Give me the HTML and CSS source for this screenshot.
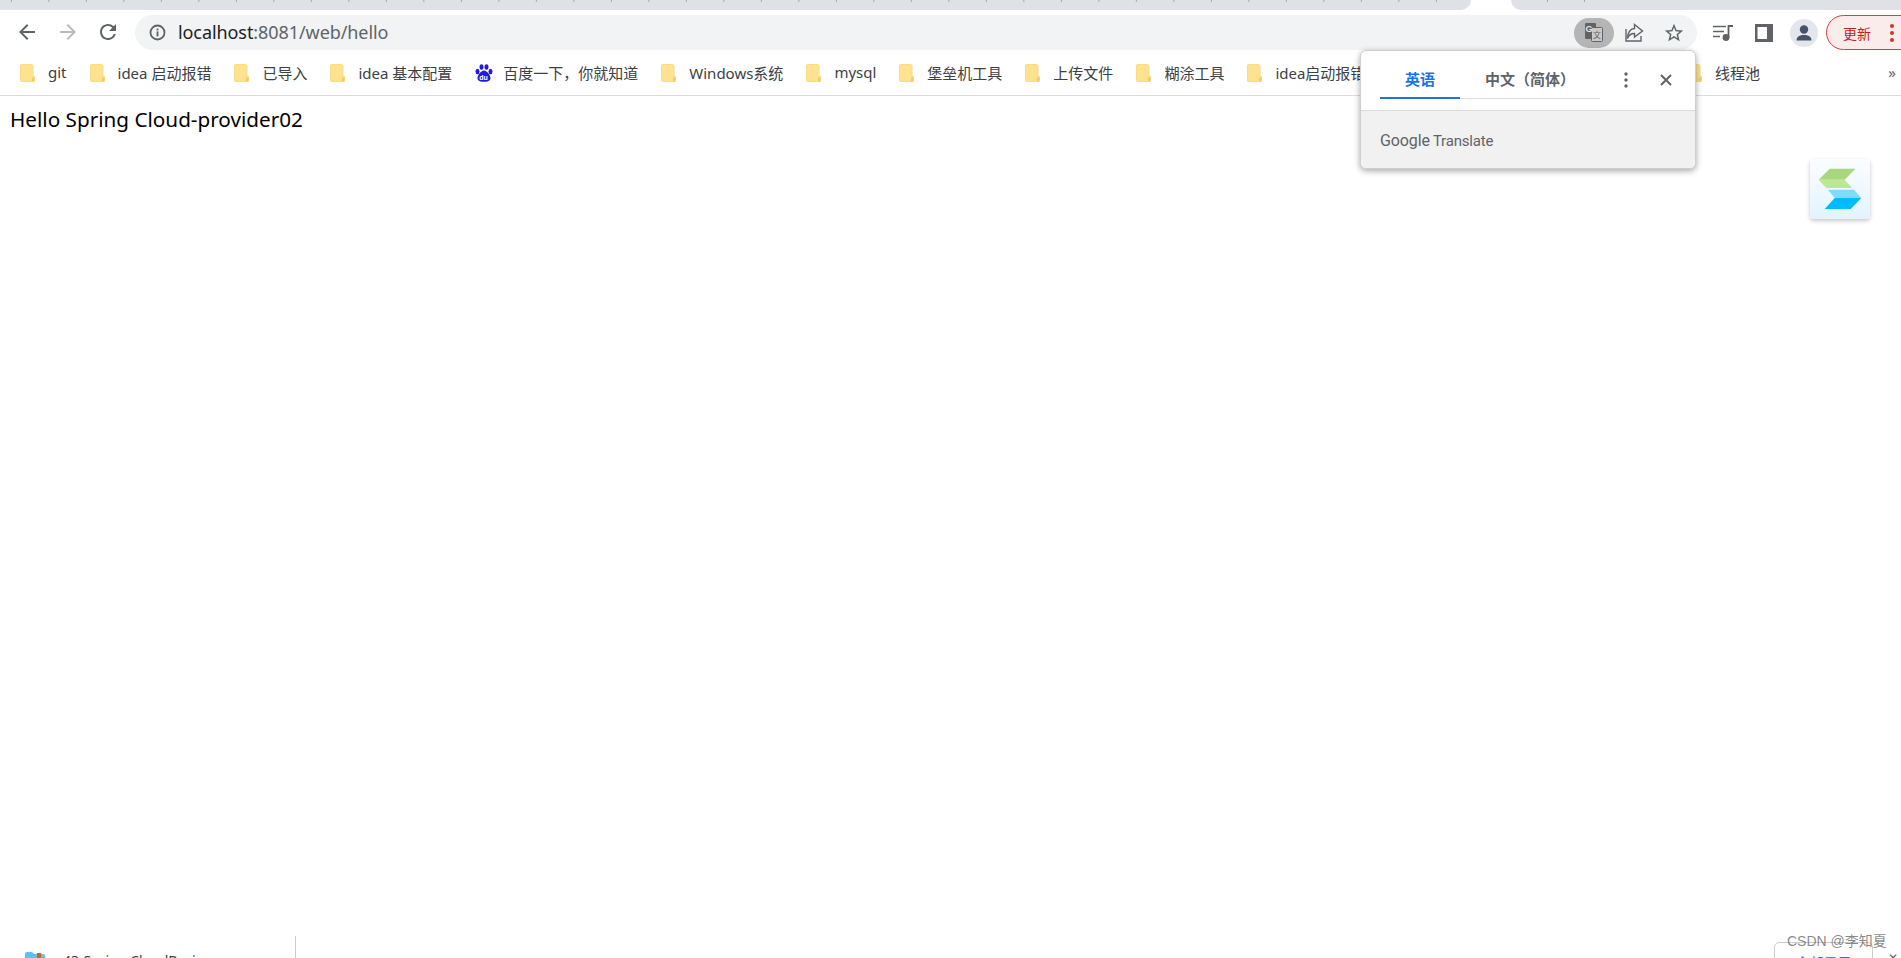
FILE: index.html
```html
<!DOCTYPE html>
<html lang="zh-CN">
<head>
<meta charset="utf-8">
<title>localhost:8081/web/hello</title>
<link rel="stylesheet" href="styles.css">
</head>
<body>
<svg class="defs" width="0" height="0" aria-hidden="true">
  <symbol id="folder" viewBox="0 0 15 18">
    <path d="M1.5.5H11.5Q13 .5 13 2V12.5H14.5V16.5Q14.5 17.5 13.5 17.5H1.5Q.5 17.5 .5 16.5V1.5Q.5 .5 1.5 .5Z" fill="#fee28f" stroke="#f8dc84"/>
    <path d="M12 13.5H14.5V17.5H12Z" fill="#f6cd5c"/>
  </symbol>
</svg>
<div class="app">
  <div class="tabstrip">
    <div class="tabs-left"></div>
    <div class="tab-active"></div>
    <div class="tabs-right"></div>
  </div>

  <div class="toolbar">
    <button class="nav nav-back"><svg width="24" height="24" viewBox="0 0 24 24"><path class="ico" d="M20 11H7.83l5.59-5.59L12 4l-8 8 8 8 1.41-1.41L7.83 13H20v-2z"/></svg></button>
    <button class="nav"><svg width="24" height="24" viewBox="0 0 24 24"><path class="ico-off" d="M4 11h12.17l-5.59-5.59L12 4l8 8-8 8-1.41-1.41L16.17 13H4v-2z"/></svg></button>
    <button class="nav"><svg width="24" height="24" viewBox="0 0 24 24"><path class="ico" d="M17.65 6.35A7.958 7.958 0 0 0 12 4c-4.42 0-7.99 3.58-7.99 8s3.57 8 7.99 8c3.73 0 6.84-2.55 7.73-6h-2.08A5.99 5.99 0 0 1 12 18c-3.31 0-6-2.69-6-6s2.69-6 6-6c1.66 0 3.14.69 4.22 1.78L13 11h7V4l-2.35 2.35z"/></svg></button>
    <div class="omnibox">
      <svg class="info" width="17" height="17" viewBox="0 0 17 17"><circle cx="8.5" cy="8.5" r="7" fill="none" stroke="#5f6368" stroke-width="1.8"/><rect class="ico" x="7.6" y="7.4" width="1.8" height="5"/><rect class="ico" x="7.6" y="4.6" width="1.8" height="1.8"/></svg>
      <span class="url"><span class="host">localhost</span>:8081/web/hello</span>
      <div class="omni-actions">
        <button class="translate-btn">
          <svg width="22" height="22" viewBox="0 0 22 22">
            <rect x="2" y="1" width="11" height="16" rx="1" fill="#5f6368"/>
            <rect x="8.5" y="5.5" width="11" height="14" rx="1" fill="#c9c9c9" stroke="#5f6368"/>
            <text class="tr-g" x="2.500" y="10">G</text>
            <text class="tr-z" x="10" y="15.500">文</text>
          </svg>
        </button>
        <button class="omni-icon"><svg width="20" height="20" viewBox="0 0 20 20"><path d="M2 6V18H17V13M10.500 1.500L18.500 8L10.500 14V10.500C7 10.500 4.500 12.500 3.500 15.500C3.500 9.500 6.500 5.500 10.500 5.500Z" fill="none" stroke="#5f6368" stroke-width="1.4"/></svg></button>
        <button class="omni-icon"><svg width="22" height="22" viewBox="0 0 24 24"><path class="ico" d="M22 9.24l-7.19-.62L12 2 9.19 8.63 2 9.24l5.46 4.73L5.82 21 12 17.27 18.18 21l-1.63-7.03L22 9.24zM12 15.4l-3.76 2.27 1-4.28-3.32-2.88 4.38-.38L12 6.1l1.71 4.04 4.38.38-3.32 2.88 1 4.28L12 15.4z"/></svg></button>
      </div>
    </div>
    <button class="tool tool-list"><svg width="20" height="18" viewBox="0 0 20 18"><path d="M0 2.500H13M0 7.500H11M0 12.500H7" stroke="#5f6368" stroke-width="1.6" fill="none"/><circle cx="13" cy="13.500" r="3.400" fill="#5f6368"/><path d="M15.500 14V2H20" stroke="#5f6368" stroke-width="1.8" fill="none"/></svg></button>
    <button class="tool"><svg width="18" height="18" viewBox="0 0 18 18"><path fill-rule="evenodd" fill="#5f6368" d="M0 0H18V18H0ZM2.500 3V15H12V3Z"/></svg></button>
    <button class="tool"><span class="avatar"><svg width="18" height="18" viewBox="0 0 18 18"><circle cx="9" cy="5.500" r="4.200" fill="#45526b"/><path d="M1.500 16.500C1.500 12.500 5 11 9 11S16.500 12.500 16.500 16.500Z" fill="#45526b"/></svg></span></button>
    <div class="update"><span class="update-text">更新</span><span class="update-dots"><i></i><i></i><i></i></span></div>
  </div>

  <div class="bookmarks">
    <div class="bm-group">
      <a class="bm"><svg class="fd"><use href="#folder"/></svg>git</a>
      <a class="bm"><svg class="fd"><use href="#folder"/></svg>idea 启动报错</a>
      <a class="bm"><svg class="fd"><use href="#folder"/></svg>已导入</a>
      <a class="bm"><svg class="fd"><use href="#folder"/></svg>idea 基本配置</a>
      <a class="bm bm-baidu"><svg class="paw" width="18" height="18" viewBox="0 0 18 18"><g fill="#2319dc"><ellipse cx="2.500" cy="7.500" rx="2" ry="2.700"/><ellipse cx="6.500" cy="3" rx="2" ry="2.800"/><ellipse cx="11.500" cy="3" rx="2" ry="2.800"/><ellipse cx="15.500" cy="7.500" rx="2" ry="2.700"/><path d="M9 6.500C12 6.500 16 12 15.500 14.500C15 17.500 12 17.800 9 17.800S3 17.500 2.500 14.500C2 12 6 6.500 9 6.500Z"/></g><text class="paw-du" x="4.300" y="15.600">du</text></svg>百度一下，你就知道</a>
      <a class="bm"><svg class="fd"><use href="#folder"/></svg>Windows系统</a>
      <a class="bm"><svg class="fd"><use href="#folder"/></svg>mysql</a>
      <a class="bm"><svg class="fd"><use href="#folder"/></svg>堡垒机工具</a>
      <a class="bm"><svg class="fd"><use href="#folder"/></svg>上传文件</a>
      <a class="bm"><svg class="fd"><use href="#folder"/></svg>糊涂工具</a>
      <a class="bm"><svg class="fd"><use href="#folder"/></svg>idea启动报错</a>
    </div>
    <a class="bm bm-last"><svg class="fd"><use href="#folder"/></svg>线程池</a>
    <span class="more">»</span>
  </div>

  <main class="page">Hello Spring Cloud-provider02</main>

  <div class="downloads">
    <div class="dl-item">
      <svg class="dl-icon" width="20" height="16" viewBox="0 0 20 16"><path d="M0 2Q0 0 2 0H7L9 2H18Q20 2 20 4V16H0Z" fill="#5cc0f4"/><rect x="12" y="1" width="4" height="15" fill="#c46a12"/></svg>
      <span class="dl-name">43-Spring CloudBasic...</span>
    </div>
    <div class="dl-right">
      <button class="dl-all">全部显示</button>
      <span class="dl-close">✕</span>
    </div>
  </div>

  <div class="popup">
    <div class="popup-head">
      <div class="popup-tabs">
        <span class="ptab ptab-on">英语</span>
        <span class="ptab">中文（简体）</span>
      </div>
      <button class="popup-btn"><svg width="4" height="16" viewBox="0 0 4 16"><circle cx="2" cy="2" r="1.700" fill="#5f6368"/><circle cx="2" cy="8" r="1.700" fill="#5f6368"/><circle cx="2" cy="14" r="1.700" fill="#5f6368"/></svg></button>
      <button class="popup-btn"><svg width="14" height="14" viewBox="0 0 14 14"><path d="M2 2L12 12M12 2L2 12" stroke="#5f6368" stroke-width="2"/></svg></button>
    </div>
    <div class="popup-foot"><span class="g-google">Google</span><span class="g-translate">Translate</span></div>
  </div>

  <div class="ext-logo">
    <svg width="60" height="60" viewBox="0 0 60 60">
      <polygon fill="#a9d77e" points="45.300,9.700 19.700,9.700 8.700,20.700 34.700,20.700"/>
      <polygon fill="#bde88f" points="8.700,20.700 34.700,20.700 42,29 16.300,29"/>
      <polygon fill="#80d9ff" points="18,30.700 44,30.700 51.300,39 24.700,39"/>
      <polygon fill="#00bbff" points="51.300,39 24.700,39 14.700,50 40.700,50"/>
    </svg>
  </div>

  <div class="watermark">CSDN @李知夏</div>
</div>
</body>
</html>
```

FILE: styles.css
```css
* { box-sizing: border-box; }
html, body { margin: 0; height: 100%; overflow: hidden; background: #fff; }
body { font-family: "Noto Sans", "Noto Sans CJK SC", sans-serif; color: #000; }
button { border: 0; padding: 0; background: none; font: inherit; }
.defs { position: absolute; }
.ico { fill: #5f6368; }
.ico-off { fill: #b9bbbe; }

.app { position: relative; display: flex; flex-direction: column; width: 1901px; height: 958px; overflow: hidden; }

/* tab strip */
.tabstrip { display: flex; height: 10px; flex: none; }
.tabs-left, .tabs-right { background-color: #dee1e6; }
.tabs-left {
  width: 1471px;
  border-bottom-right-radius: 10px;
  background-image: linear-gradient(90deg, transparent 11px, #a5a7ab 11px, #a5a7ab 12px, transparent 12px);
  background-size: 37.500px 2px;
  background-repeat: repeat-x;
}
.tab-active { width: 40px; background: #fff; }
.tabs-right {
  flex: 1;
  border-bottom-left-radius: 10px;
  background-image: linear-gradient(#a5a7ab, #a5a7ab), linear-gradient(#a5a7ab, #a5a7ab);
  background-size: 1px 2px, 1px 2px;
  background-position: 36px 0, 73px 0;
  background-repeat: no-repeat;
}

/* toolbar */
.toolbar { display: flex; align-items: center; flex: none; height: 45px; padding: 5px 0 5px 8px; }
.nav { display: flex; align-items: center; justify-content: center; width: 40px; height: 35px; flex: none; }
.nav svg { margin-top: -2px; }
.nav-back svg { margin-right: 2px; }
.omnibox { display: flex; align-items: center; flex: none; width: 1562px; height: 35px; margin-left: 7px; margin-right: 7px; padding: 0 3px 0 14px; background: #f1f3f4; border-radius: 18px; }
.info { flex: none; margin-top: -1px; }
.url { margin: -2px 0 0 12px; font-size: 18px; letter-spacing: -0.08px; color: #5f6368; white-space: nowrap; }
.host { color: #202124; }
.omni-actions { display: flex; align-items: center; margin-left: auto; }
.translate-btn { display: flex; align-items: center; justify-content: center; width: 40px; height: 30px; background: #b5b5b5; border-radius: 15px; }
.tr-g { font: bold 9px "Liberation Sans", sans-serif; fill: #e4e4e4; }
.tr-z { font: 8px "Noto Sans CJK SC", sans-serif; fill: #5f6368; }
.omni-icon { display: flex; align-items: center; justify-content: center; width: 40px; height: 30px; }
.tool { display: flex; align-items: center; justify-content: center; width: 40px; height: 35px; flex: none; }
.tool-list svg { margin-right: 2px; }
.avatar { display: flex; align-items: center; justify-content: center; width: 28px; height: 28px; background: #e3e6ec; border-radius: 50%; }
.update { display: flex; align-items: center; flex: none; width: 96px; height: 35px; margin-left: 2px; padding-left: 16px; background: #faeceb; border: 1.500px solid #d9403c; border-radius: 18px; }
.update-text { font-size: 14px; color: #c5221f; }
.update-dots { display: flex; flex-direction: column; gap: 3px; margin-left: 19px; }
.update-dots i { display: block; width: 4px; height: 4px; background: #d93025; border-radius: 50%; }

/* bookmarks */
.bookmarks { display: flex; align-items: center; flex: none; height: 41px; padding: 0 0 6px 20px; border-bottom: 1px solid #dadce0; font-size: 15px; color: #3c4043; }
.bm-group { display: flex; align-items: center; flex: none; width: 1340px; overflow: hidden; }
.bm { display: flex; align-items: center; flex: none; margin-right: 23px; white-space: nowrap; }
.fd { flex: none; width: 15px; height: 18px; margin-right: 13px; margin-top: 2px; }
.paw { flex: none; margin-right: 10px; margin-top: 1px; }
.paw-du { font: bold 7px "Liberation Sans", sans-serif; fill: #fff; }
.bm-last { margin-left: 327px; margin-right: 0; }
.more { margin-left: auto; margin-right: 5px; font-size: 15px; color: #5f6368; }

/* page */
.page { flex: 1; padding: 11px 0 0 10px; font-size: 20.700px; line-height: 24px; }

/* download shelf */
.downloads { display: flex; justify-content: space-between; flex: none; height: 22px; background: #fff; overflow: hidden; }
.dl-item { display: flex; align-items: flex-start; width: 296px; padding: 16px 0 0 25px; border-right: 1px solid #ccc; }
.dl-icon { flex: none; }
.dl-name { margin: -1px 0 0 18px; font-size: 14px; line-height: 20px; color: #3c4043; white-space: nowrap; }
.dl-right { display: flex; align-items: flex-start; padding-top: 6px; }
.dl-all { width: 99px; height: 36px; border: 1px solid #ccc; border-radius: 5px; color: #1a73e8; font-size: 14px; line-height: 20px; padding-top: 5px; text-align: center; }
.dl-close { margin: 8px 3px 0 15px; font-size: 12px; line-height: 16px; color: #5f6368; }

/* translate popup */
.popup { position: absolute; left: 1360px; top: 50px; display: flex; flex-direction: column; width: 336px; height: 119px; background: #fff; border: 1px solid #cfcfcf; border-radius: 6px; box-shadow: 0 2px 6px rgba(0, 0, 0, .35); overflow: hidden; }
.popup-head { display: flex; align-items: flex-start; flex: none; height: 60px; padding: 15px 0 0 19px; border-bottom: 1px solid #dadce0; }
.popup-tabs { display: flex; width: 220px; height: 33px; margin-right: 6px; border-bottom: 1px solid #dadce0; }
.ptab { height: 33px; padding-top: 3px; font-size: 15px; line-height: 20px; font-weight: 700; color: #5f6368; white-space: nowrap; }
.ptab:last-child { margin-left: 25px; }
.ptab-on { width: 80px; text-align: center; color: #1a73e8; border-bottom: 2px solid #1a73e8; }
.popup-btn { display: flex; align-items: center; justify-content: center; width: 40px; height: 27px; }
.popup-foot { display: flex; align-items: baseline; flex: 1; padding: 19px 0 0 19px; background: #f1f1f1; color: #5f6368; }
.g-google { font: 16px/22px "Roboto", sans-serif; letter-spacing: -0.1px; }
.g-translate { margin-left: 3px; font: 15px/22px "Roboto", sans-serif; letter-spacing: -0.2px; }

/* overlays */
.ext-logo { position: absolute; left: 1810px; top: 159px; width: 60px; height: 60px; background: linear-gradient(#fbfdff, #e2f4fe); border-radius: 4px; box-shadow: 0 2px 4px rgba(0, 0, 0, .22); }
.ext-logo svg { display: block; }
.watermark { position: absolute; left: 1787px; top: 931px; font-family: "Liberation Sans", "Noto Sans CJK SC", sans-serif; font-size: 14px; line-height: 20px; color: rgba(90, 90, 90, .72); white-space: nowrap; }
```
